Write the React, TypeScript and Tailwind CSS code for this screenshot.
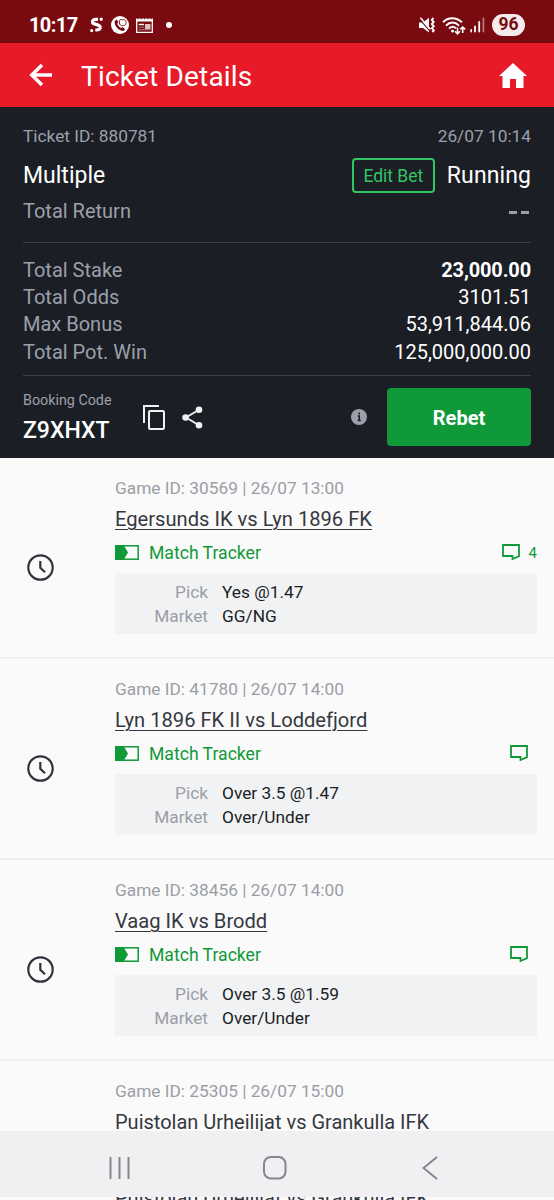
import clsx from 'clsx'

interface Game {
  id: string
  date: string
  teams: string
  pick: string
  market: string
  comments?: number
}

const games: Game[] = [
  { id: '30569', date: '26/07 13:00', teams: 'Egersunds IK vs Lyn 1896 FK', pick: 'Yes @1.47', market: 'GG/NG', comments: 4 },
  { id: '41780', date: '26/07 14:00', teams: 'Lyn 1896 FK II vs Loddefjord', pick: 'Over 3.5 @1.47', market: 'Over/Under' },
  { id: '38456', date: '26/07 14:00', teams: 'Vaag IK vs Brodd', pick: 'Over 3.5 @1.59', market: 'Over/Under' },
]

const totals = [
  { label: 'Total Stake', value: '23,000.00', bold: true },
  { label: 'Total Odds', value: '3101.51' },
  { label: 'Max Bonus', value: '53,911,844.06' },
  { label: 'Total Pot. Win', value: '125,000,000.00' },
]

function StatusBar() {
  return (
    <div className="flex h-[43px] shrink-0 items-center bg-[#780a10] pr-[29px] pl-[29px] pt-[7px] text-white">
      <span className="w-[61px] text-[20px] leading-5 font-bold tracking-[-0.6px]">10:17</span>
      <svg className="h-4 w-[13px]" viewBox="0 0 13 16" fill="none" stroke="currentColor" strokeWidth="3.2">
        <path d="M8 2.4H6C3.4 2.4 2 3.8 2.5 5.4C3.2 7.8 9.8 7 10.2 10C10.5 12 9 13 6.5 13H5.3" />
        <circle cx="11.2" cy="2.2" r="1.6" fill="currentColor" stroke="none" />
        <circle cx="1.7" cy="13.6" r="1.6" fill="currentColor" stroke="none" />
      </svg>
      <svg className="ml-2 h-[18px] w-[18px]" viewBox="0 0 18 18">
        <circle cx="9" cy="9" r="9" fill="currentColor" />
        <path d="M5.6 3.5L3.6 5.2C3.3 10 7.6 14.8 12.5 15L14.2 13.2L11.6 11L10.1 12C8.5 11 7 9.5 6.2 7.7L7.4 6Z" fill="#780a10" />
        <path d="M9 3.8C10.4 3 11.4 4.4 12.2 3.6C14.5 3.4 15.8 6 14.6 8.2C13.6 10 12.6 9.4 11.6 9.6C9.6 10 8.6 8.6 8.4 7C8.2 5.6 8.4 4.4 9 3.8Z" fill="none" stroke="#780a10" strokeWidth=".9" />
      </svg>
      <svg className="ml-[7px] h-4 w-[17px]" viewBox="0 0 17 16" fill="none" stroke="currentColor">
        <path d="M.7 4V15.3H16.3V4" strokeWidth="1.3" />
        <path d="M0 3H17" strokeWidth="3" />
        <path d="M2 1V2.3M5.2 1V2.3M8.5 1V2.3M11.8 1V2.3M15 1V2.3" stroke="#780a10" strokeWidth="1" />
        <path d="M2.7 7.5H8" strokeWidth="1.4" />
        <path d="M2.7 10.2H8M2.7 12.7H14.5" strokeWidth=".8" opacity=".6" />
        <path d="M9 7H14.5V12H9Z" fill="currentColor" stroke="none" opacity=".75" />
      </svg>
      <span className="ml-[13px] h-1.5 w-1.5 rounded-full bg-white" />
      <svg className="ml-auto h-4 w-4" viewBox="0 0 16 16" fill="none" stroke="currentColor">
        <path d="M0 5.5H4L10 .8V15.5L4 11H0Z" fill="currentColor" stroke="none" />
        <path d="M0 1.6L11 14.2" stroke="#780a10" strokeWidth="1.1" />
        <path d="M1.4 .8L11.3 12.2" strokeWidth="1.5" />
        <path d="M14.4 .8L12.8 2.9L14.8 5L12.8 7.1L14.8 9.2L12.8 11.3L14.8 13.4L13.4 15.2" strokeWidth="1.9" />
      </svg>
      <svg className="ml-[7px] h-[19px] w-6" viewBox="0 0 24 19" fill="none" stroke="currentColor" strokeWidth="2">
        <path d="M1 6.2C6 .8 14 .8 20 6.2M4 9.6C8 5.6 13 5.6 17 9.6M7 12.6C9.3 10.4 12 10.4 14 12.4" />
        <circle cx="10.5" cy="15" r="1.5" fill="currentColor" stroke="none" />
        <path d="M15.5 11.5V18M13 15.2L15.5 17.8L18 15.2M20.7 17V11M18.3 13.4L20.7 11L23.2 13.4" strokeWidth="1.6" />
      </svg>
      <svg className="ml-1 h-4 w-[15px]" viewBox="0 0 15 16" fill="none" stroke="currentColor" strokeWidth="1.8" strokeLinecap="round">
        <path d="M1.2 13V14.6M5 9.5V14.6M9.2 5V14.6" />
        <path d="M13.4 1.4V14.6" opacity=".45" />
      </svg>
      <span className="mb-px ml-[7px] flex h-[22px] w-[33px] items-center justify-center rounded-full bg-[#f5ebec] pt-px text-[17.5px] leading-none font-bold text-[#780a10]">
        96
      </span>
    </div>
  )
}

function Header() {
  return (
    <header className="flex h-16 shrink-0 items-center bg-[#e61a28] pr-[27px] pl-[29px] text-white">
      <svg className="h-6 w-6" viewBox="0 0 24 24" fill="none" stroke="currentColor" strokeWidth="3.5">
        <path d="M23 12H3M13 2L2.8 12L13 22" />
      </svg>
      <h1 className="mt-[3px] ml-[28px] text-[28px] leading-8 tracking-[0.2px]">Ticket Details</h1>
      <svg className="ml-auto h-[25px] w-7" viewBox="0 0 28 25" fill="currentColor">
        <path d="M14 0L28 13H24.5V25H17V16H11V25H3.5V13H0Z" />
      </svg>
    </header>
  )
}

function Summary() {
  return (
    <section className="flex h-[351px] shrink-0 flex-col bg-[#1b1e25] px-[23px] pt-[18px] text-[#9ca0aa]">
      <div className="flex justify-between text-[17.3px] leading-[22px]">
        <span>Ticket ID: 880781</span>
        <span>26/07 10:14</span>
      </div>
      <div className="mt-[11px] flex h-[35px] items-center text-[23px] text-white">
        <span className="pt-0.5">Multiple</span>
        <button className="ml-auto h-[35px] w-[83px] rounded-[4px] border-2 border-[#32c564] pt-px text-[17.5px] text-[#32c564]">
          Edit Bet
        </button>
        <span className="pt-0.5 ml-3 tracking-[0.1px]">Running</span>
      </div>
      <div className="mt-1.5 flex h-6 items-center justify-between text-[20px]">
        <span>Total Return</span>
        <span className="flex gap-1 pt-0.5 pr-0.5">
          <i className="h-[3px] w-2 bg-current" />
          <i className="h-[3px] w-2 bg-current" />
        </span>
      </div>
      <div className="mt-[19px] h-px shrink-0 bg-[#3c3f47]" />
      <div className="mt-[14px] text-[20px] leading-[27.2px]">
        {totals.map((row) => (
          <div key={row.label} className="flex justify-between">
            <span>{row.label}</span>
            <span className={clsx('text-white', row.bold && 'font-bold tracking-[-0.15px]')}>{row.value}</span>
          </div>
        ))}
      </div>
      <div className="mt-[9px] h-px shrink-0 bg-[#3c3f47]" />
      <div className="mt-3 flex h-[58px] items-center">
        <div className="w-[120px]">
          <p className="mt-1 text-[14.3px] leading-4">Booking Code</p>
          <p className="mt-[9px] text-[23px] leading-7 font-medium text-white">Z9XHXT</p>
        </div>
        <svg className="mt-px h-[25px] w-[22px] text-[#f1f2f4]" viewBox="0 0 22 25" fill="none" stroke="currentColor" strokeWidth="2">
          <path d="M1 18V1H16" />
          <rect x="6" y="6" width="15" height="18" rx="1.2" />
        </svg>
        <svg className="mt-px ml-[17px] h-[23px] w-[21px] text-[#f1f2f4]" viewBox="0 0 21 23" fill="currentColor">
          <path d="M17 3.8L4 11.5L17 19.2" fill="none" stroke="currentColor" strokeWidth="1.8" />
          <circle cx="17" cy="3.8" r="3.3" />
          <circle cx="3.6" cy="11.5" r="3.3" />
          <circle cx="17" cy="19.2" r="3.3" />
        </svg>
        <svg className="ml-auto h-4 w-4" viewBox="0 0 16 16">
          <circle cx="8" cy="8" r="8" fill="currentColor" />
          <path d="M8.2 3.6V5.4M6.8 7H8.3V12M6.6 11.5H9.8" fill="none" stroke="#1b1e25" strokeWidth="1.5" />
        </svg>
        <button className="ml-5 h-[58px] w-36 rounded-[4px] bg-[#109938] pt-0.5 text-[20px] font-bold text-white">Rebet</button>
      </div>
    </section>
  )
}

function GameCard({ game }: { game: Game }) {
  return (
    <article className="flex h-[201px] shrink-0 items-center border-b-2 border-[#edeef1] pr-[17px] pl-[27px]">
      <svg className="mt-[19px] h-[27px] w-[27px] text-[#30333c]" viewBox="0 0 27 27" fill="none" stroke="currentColor">
        <circle cx="13.5" cy="13.5" r="12.2" strokeWidth="2.2" />
        <path d="M13.3 7V13.7L18 18.3" strokeWidth="2.2" />
      </svg>
      <div className="ml-[61px] h-full flex-1 pt-[19px]">
        <p className="text-[17.3px] leading-[22px] text-[#9b9ea6]">
          Game ID: {game.id} | {game.date}
        </p>
        <h2 className="mt-2 text-[20.15px] leading-6 text-[#353840] underline decoration-1 underline-offset-[3px]">{game.teams}</h2>
        <div className="mt-[10px] flex h-[22px] items-center text-[#109938]">
          <svg className="h-[15px] w-6" viewBox="0 0 24 15">
            <rect x=".8" y=".8" width="22.4" height="13.4" fill="none" stroke="currentColor" strokeWidth="1.5" />
            <path d="M0 0H8.5L13 7.5L8.5 15H0Z" fill="currentColor" />
          </svg>
          <span className="ml-[10px] pt-0.5 text-[17.6px]">Match Tracker</span>
          <svg
            className={clsx('ml-auto h-4 w-[18px]', !game.comments && 'mr-[9px]')}
            viewBox="0 0 18 16"
            fill="none"
            stroke="currentColor"
            strokeWidth="1.8"
          >
            <path d="M1 1H17V12.2L10.5 15V12H1Z" />
          </svg>
          {game.comments && <span className="ml-[9px] pt-0.5 text-[15px]">{game.comments}</span>}
        </div>
        <div className="mt-[10px] flex h-[61px] flex-col justify-center bg-[#f1f2f4] text-[17.3px] leading-6 text-[#1b1e25]">
          <div className="flex">
            <span className="w-[93px] text-right text-[#9b9ea6]">Pick</span>
            <span className="ml-[14px]">{game.pick}</span>
          </div>
          <div className="flex">
            <span className="w-[93px] text-right text-[#9b9ea6]">Market</span>
            <span className="ml-[14px]">{game.market}</span>
          </div>
        </div>
      </div>
    </article>
  )
}

function NavBar() {
  return (
    <nav className="flex h-[66px] shrink-0 items-center bg-[#f0f0f2] pt-[7px] pr-[116px] pl-[109px] text-[#85858a]">
      <svg className="h-6 w-[21px]" viewBox="0 0 21 24" fill="none" stroke="currentColor" strokeWidth="2">
        <path d="M1.5 1V23M10.5 1V23M19.5 1V23" />
      </svg>
      <svg className="ml-[133px] h-6 w-6" viewBox="0 0 24 24" fill="none" stroke="currentColor" strokeWidth="2">
        <rect x="1" y="1" width="21.5" height="21.5" rx="7" />
      </svg>
      <svg className="ml-auto h-6 w-4" viewBox="0 0 16 24" fill="none" stroke="currentColor" strokeWidth="2">
        <path d="M15 1L1.5 12L15 23" />
      </svg>
    </nav>
  )
}

export default function App() {
  return (
    <div className="flex h-[1200px] w-[554px] flex-col overflow-hidden bg-[#fafafa] font-['Roboto',sans-serif]">
      <StatusBar />
      <Header />
      <Summary />
      {games.map((game) => (
        <GameCard key={game.id} game={game} />
      ))}
      <div className="h-[70px] shrink-0 overflow-hidden pt-[19px] pl-[115px]">
        <p className="text-[17.3px] leading-[22px] text-[#9b9ea6]">Game ID: 25305 | 26/07 15:00</p>
        <h2 className="mt-2 text-[20px] leading-6 text-[#353840]">Puistolan Urheilijat vs Grankulla IFK</h2>
      </div>
      <NavBar />
      <div className="h-[3px] shrink-0 overflow-hidden pl-[115px]">
        <p className="-mt-[11px] text-[20px] leading-6 text-[#353840]">Puistolan Urheilijat vs Grankulla IFK</p>
      </div>
    </div>
  )
}
